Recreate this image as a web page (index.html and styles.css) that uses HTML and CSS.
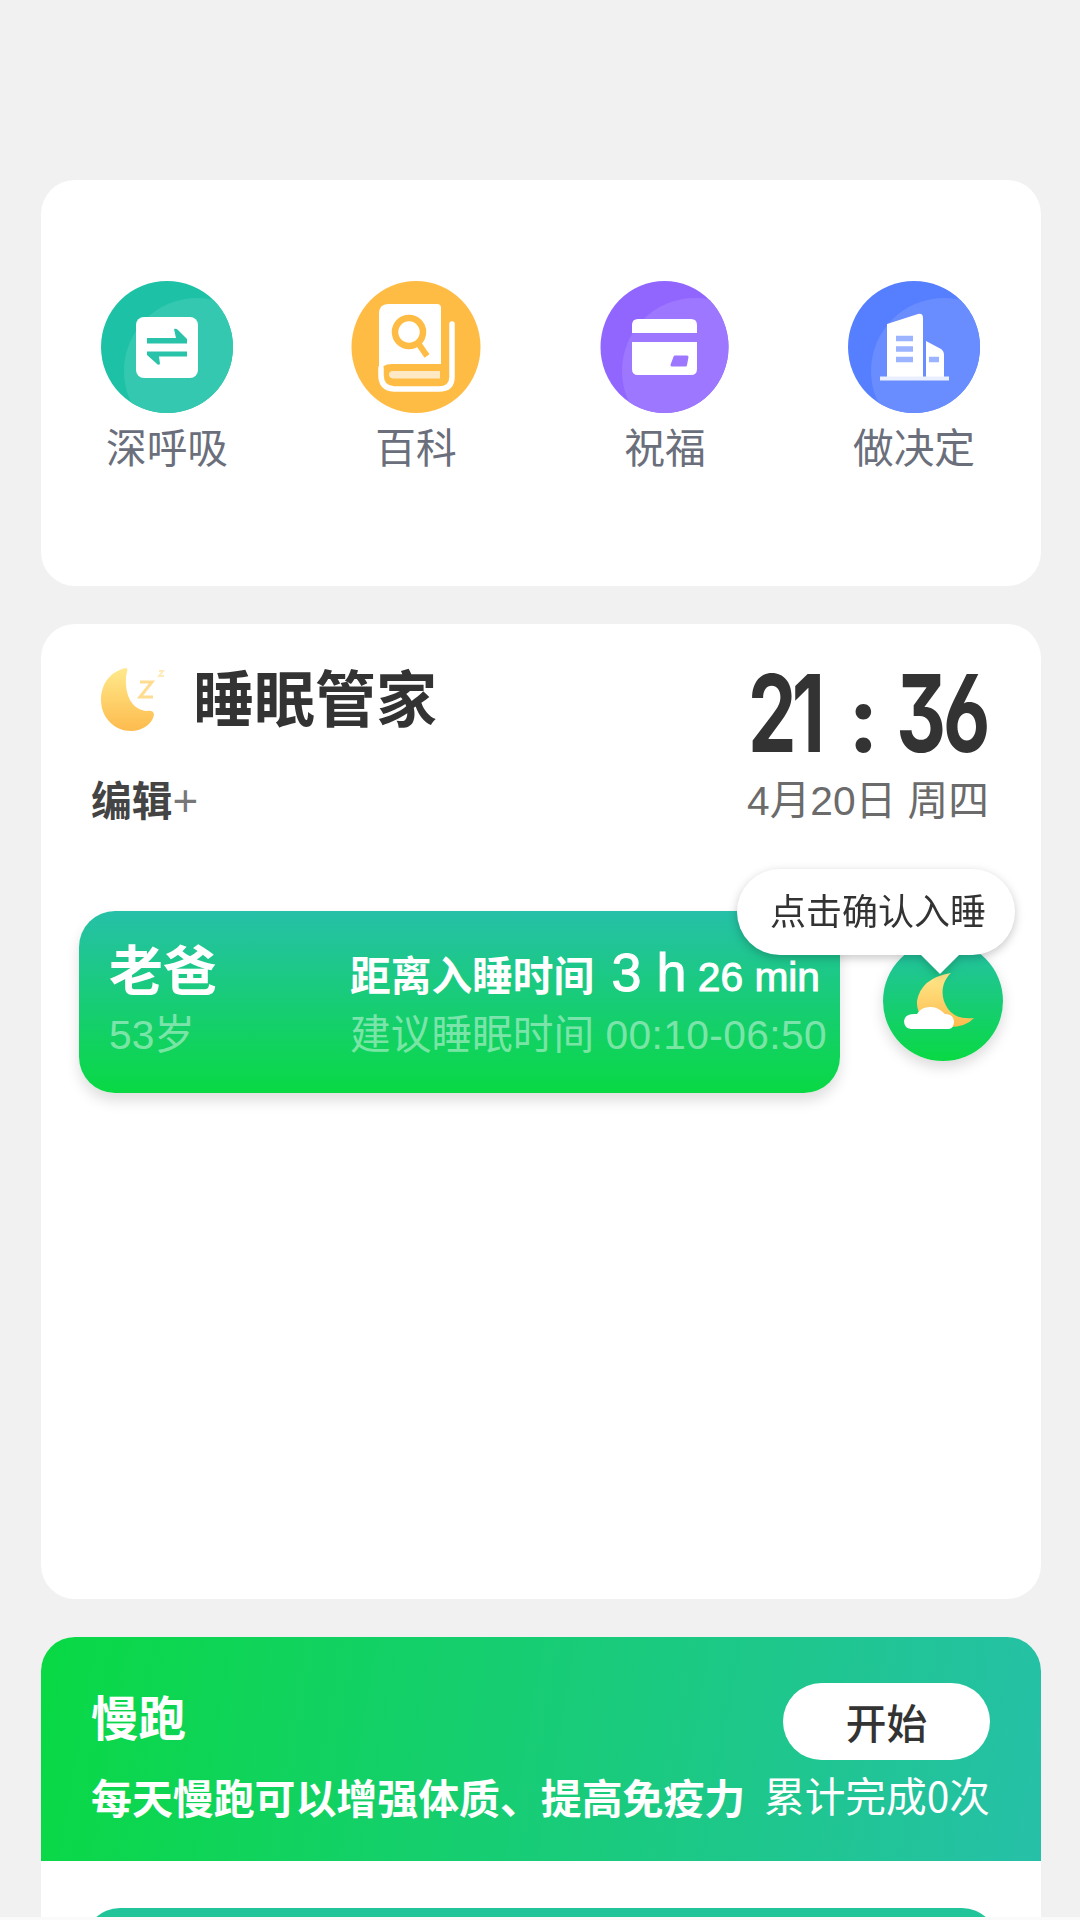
FILE: index.html
```
<!DOCTYPE html>
<html lang="zh-CN">
<head>
<meta charset="utf-8">
<title>睡眠管家</title>
<link rel="stylesheet" href="styles.css">
</head>
<body>
<main class="page">
  <section class="card shortcuts">
    <a class="shortcut">
      <svg class="shortcut-icon" viewBox="0 0 134 134">
        <defs><clipPath id="disc"><circle cx="67" cy="67" r="66"/></clipPath></defs>
        <circle cx="67" cy="67" r="66" fill="#1dc1a6"/>
        <circle cx="97" cy="91" r="73" fill="#35c8b0" clip-path="url(#disc)"/>
        <rect x="36" y="37" width="62" height="61" rx="8" fill="#fff"/>
        <g fill="#29c3aa">
          <path d="M47 58H76L74 49Q76 48 78 50L87 59V63.500H47Z"/>
          <path d="M87 76.500H59L60 84Q58 86 56 83L47 75V71.500H87Z"/>
        </g>
      </svg>
      <span class="shortcut-label">深呼吸</span>
    </a>
    <a class="shortcut">
      <svg class="shortcut-icon" viewBox="0 0 134 134">
        <ellipse cx="67" cy="67" rx="64.500" ry="66" fill="#ffbc45"/>
        <path d="M39 24H88Q92 24 92 28V84H43Q32 84 30 93V34Q30 24 39 24Z" fill="#fff"/>
        <path d="M32 88V95Q32 108.500 45 109H90Q103 109 103 97V44" fill="none" stroke="#fff" stroke-width="5.500" stroke-linecap="round"/>
        <path d="M44 91H91V98.500H44Q40 98 40 94.500T44 91Z" fill="#ffe9c4"/>
        <circle cx="60" cy="52" r="14" fill="none" stroke="#ffbc45" stroke-width="6.500"/>
        <path d="M69 63L78 76" stroke="#ffbc45" stroke-width="6"/>
      </svg>
      <span class="shortcut-label">百科</span>
    </a>
    <a class="shortcut">
      <svg class="shortcut-icon" viewBox="0 0 134 134">
        <defs><clipPath id="oval"><ellipse cx="66.500" cy="67" rx="64" ry="66"/></clipPath></defs>
        <ellipse cx="66.500" cy="67" rx="64" ry="66" fill="#9166ff"/>
        <circle cx="97" cy="91" r="73" fill="#9d77ff" clip-path="url(#oval)"/>
        <path d="M40 39H93Q99 39 99 45V53H34V45Q34 39 40 39ZM34 62H99V89Q99 95 93 95H40Q34 95 34 89Z" fill="#fff"/>
        <path d="M77 77H89L87.500 85H74Z" fill="#9d77ff" stroke="#9d77ff" stroke-width="3" stroke-linejoin="round"/>
      </svg>
      <span class="shortcut-label">祝福</span>
    </a>
    <a class="shortcut">
      <svg class="shortcut-icon" viewBox="0 0 134 134">
        <circle cx="67" cy="67" r="66" fill="#557fff"/>
        <circle cx="97" cy="91" r="73" fill="#698dff" clip-path="url(#disc)"/>
        <path d="M40 97V44L71 34Q76 33 76 38V97ZM79 61L94 69Q97 71 97 75V97H79Z" fill="#fff"/>
        <path d="M33 98.500H102" stroke="#e9efff" stroke-width="4"/>
        <path d="M49 58.500H66M49 69H66M49 79.500H66M82 79.500H92" stroke="#9cb4ff" stroke-width="5.500"/>
      </svg>
      <span class="shortcut-label">做决定</span>
    </a>
  </section>

  <section class="card sleep">
    <header class="sleep-head">
      <div class="sleep-intro">
        <div class="sleep-brand">
          <svg class="brand-moon" viewBox="0 0 66 66">
            <defs><linearGradient id="gold" x1="0" y1="0" x2="0" y2="1"><stop offset="0" stop-color="#ffe98c"/><stop offset="1" stop-color="#fdbb4d"/></linearGradient></defs>
            <path d="M25 0C7 4 0 18 0 32C0 50 14 63 30 63C40 63 51 57 53 47C53 43 50 42 46 43C32 42 24 29 25 10C25 5 28 1 25 0Z" fill="url(#gold)"/>
            <path d="M39 14H51L39 29H52" fill="none" stroke="#ffdc8f" stroke-width="3"/>
            <path d="M58 3H62L58 8H63" fill="none" stroke="#ffeab9" stroke-width="2"/>
          </svg>
          <h1 class="brand-title">睡眠管家</h1>
        </div>
        <div class="edit"><b>编辑</b><span class="plus">+</span></div>
      </div>
      <div class="now">
        <svg class="clock" viewBox="0 0 244 90">
          <g transform="scale(.72 1)">
            <text x="4" y="84">2</text><text x="65" y="84">1</text><text x="210" y="84">3</text><text x="275" y="84">6</text>
          </g>
          <text class="colon" x="103" y="84">:</text>
        </svg>
        <div class="date">4月20日 周四</div>
      </div>
    </header>
    <div class="member-row">
      <article class="member">
        <div class="member-who">
          <div class="member-name">老爸</div>
          <div class="faint">53岁</div>
        </div>
        <div class="member-plan">
          <div class="countdown"><b>距离入睡时间</b> <span class="hours">3 h</span> 26 min</div>
          <div class="faint advice">建议睡眠时间 <span class="range">00:10-06:50</span></div>
        </div>
      </article>
      <div class="confirm">
        <svg class="confirm-icon" viewBox="0 0 120 120">
          <path d="M68 32Q38 37 34 60Q33 74 48 86H66Q83 86 91 77Q73 79 65 68C56 55 59 40 68 32Z" fill="url(#gold)"/>
          <path d="M28 88H66Q71 87 71 80Q70 73 62 73Q54 65 47 66Q38 66 34 73Q22 72 21 80Q21 87 28 88Z" fill="#fff"/>
        </svg>
        <div class="tip">点击确认入睡</div>
      </div>
    </div>
  </section>

  <section class="card activity">
    <header class="activity-head">
      <div class="activity-row">
        <h2 class="activity-title">慢跑</h2>
        <button class="start">开始</button>
      </div>
      <div class="activity-row info">
        <span class="activity-desc">每天慢跑可以增强体质、提高免疫力</span>
        <span class="activity-count">累计完成0次</span>
      </div>
    </header>
    <div class="activity-item"></div>
  </section>
</main>
</body>
</html>
```
FILE: styles.css
```
* { box-sizing: border-box; }

body {
  margin: 0;
  background: #fafafa;
  color: #333;
  font: 40.7px/48px "Liberation Sans", "Noto Sans CJK SC", sans-serif;
}

h1, h2 { margin: 0; }

.page {
  display: flex;
  flex-direction: column;
  gap: 38px;
  height: 1917px;
  padding: 180px 39px 0 41px;
  background: #f1f1f1;
  overflow: hidden;
}

.card {
  flex-shrink: 0;
  background: #fff;
  border-radius: 34px;
}

.shortcuts {
  display: grid;
  grid-template-columns: repeat(4, 249px);
  justify-content: center;
  height: 406px;
  padding: 100px 1px 0 0;
}

.shortcut {
  display: flex;
  flex-direction: column;
  align-items: center;
}

.shortcut-icon { width: 134px; height: 134px; }

.shortcut-label {
  margin-top: 11px;
  color: #6b6f7c;
}

.sleep { height: 975px; padding: 44px 39px 0 38px; }

.sleep-head {
  display: flex;
  justify-content: space-between;
  height: 243px;
  padding: 0 13px 0 12px;
}

.sleep-intro { padding-top: 2px; }

.sleep-brand {
  display: flex;
  align-items: center;
  gap: 26px;
  height: 62px;
  padding-left: 10px;
}

.brand-moon { width: 66px; height: 66px; }

.brand-title {
  font-size: 61px;
  line-height: 62px;
}

.edit { margin-top: 45px; color: #444; }

.plus { color: #777; font-size: 44px; }

.now {
  display: flex;
  flex-direction: column;
  align-items: flex-end;
  color: #333;
}

.clock {
  width: 244px;
  height: 90px;
  overflow: visible;
  fill: #333;
  font: 700 107px "Inter", sans-serif;
  font-feature-settings: "cv09", "ss01";
}

.colon { font-size: 92px; }

.date { margin-top: 19px; color: #6b6b6b; }

.member-row {
  display: flex;
  align-items: flex-start;
  justify-content: space-between;
}

.member {
  display: flex;
  width: 761px;
  height: 182px;
  padding: 33px 0 0 30px;
  background: linear-gradient(180deg, #26c0a8, #09d944);
  border-radius: 36px;
  box-shadow: 0 8px 14px rgba(0, 0, 0, .13);
  color: #fff;
}

.member-who { width: 241px; }

.member-name {
  font-size: 54px;
  font-weight: 700;
  line-height: 56px;
}

.member-who .faint { margin-top: 11px; }

.faint { color: rgba(255, 255, 255, .46); white-space: nowrap; }

.countdown {
  height: 56px;
  line-height: 56px;
  white-space: nowrap;
  -webkit-text-stroke: 1px #fff;
}

.countdown b { margin-right: 6px; -webkit-text-stroke: 0; }

.hours { font-size: 54px; }

.advice { margin-top: 11px; }

.range { letter-spacing: .4px; }

.confirm {
  position: relative;
  width: 120px;
  height: 120px;
  margin: 30px -1px 0 0;
  background: linear-gradient(180deg, #26c0a8, #09d944);
  border-radius: 50%;
  box-shadow: 0 6px 14px rgba(0, 0, 0, .15);
}

.confirm-icon { display: block; width: 120px; height: 120px; }

.tip {
  position: absolute;
  top: -72px;
  right: -12px;
  width: 278px;
  height: 86px;
  padding-left: 33px;
  background: #fff;
  border-radius: 43px;
  filter: drop-shadow(0 3px 5px rgba(0, 0, 0, .22));
  font-size: 36px;
  line-height: 87px;
  white-space: nowrap;
}

.tip::after {
  content: "";
  position: absolute;
  top: 85px;
  left: 183px;
  border: 20px solid transparent;
  border-top-color: #fff;
  border-bottom: 0;
}

.activity { height: 360px; overflow: hidden; }

.activity-head {
  height: 224px;
  padding: 46px 51px 0 50px;
  background: linear-gradient(100deg, #09d944, #26c0a8);
  color: #fff;
}

.activity-row { display: flex; justify-content: space-between; }

.activity-title { font-size: 47.5px; line-height: 74px; }

.start {
  width: 207px;
  height: 77px;
  padding: 0;
  border: 0;
  border-radius: 39px;
  background: #fff;
  color: #333;
  font: 500 40.7px/75px "Noto Sans CJK SC", sans-serif;
}

.info { margin-top: 11px; }

.activity-desc { padding-top: 5px; font-size: 40.9px; font-weight: 700; }

.activity-count { font-family: "Noto Sans CJK SC", sans-serif; }

.activity-item {
  height: 180px;
  margin: 47px 43px 0;
  background: linear-gradient(180deg, #22c49c, #09d944);
  border-radius: 36px;
}
```
